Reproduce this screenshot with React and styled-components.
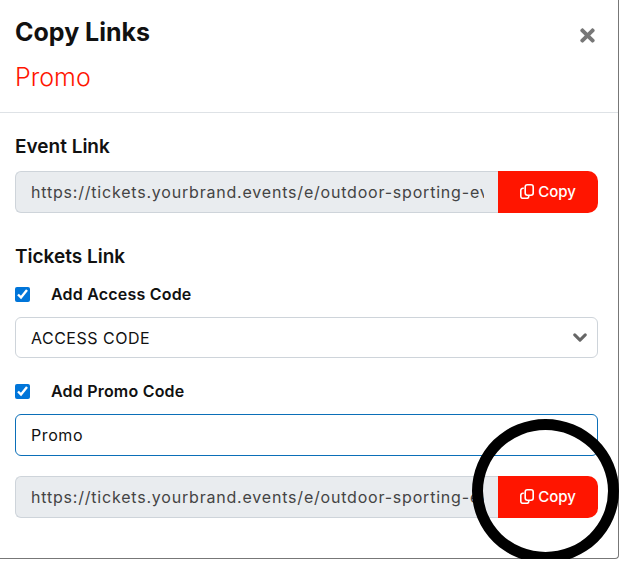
import React from 'react';
import styled, { createGlobalStyle } from 'styled-components';
import { FaTimes } from 'react-icons/fa';

const GlobalStyle = createGlobalStyle`
  html, body {
    margin: 0;
    padding: 0;
    background: #fff;
  }
  body {
    font-family: Inter, "Liberation Sans", sans-serif;
    color: #111;
  }
`;

const Modal = styled.div`
  position: relative;
  box-sizing: border-box;
  width: 619px;
  height: 559px;
  border-right: 1px solid #777;
  border-bottom: 1px solid #777;
  border-bottom-right-radius: 4px;
  background: #fff;
`;

const Header = styled.header`
  box-sizing: border-box;
  height: 113px;
  padding: 18px 20px 0 15px;
  border-bottom: 1px solid #dee2e6;
  display: flex;
  justify-content: space-between;
  align-items: flex-start;
`;

const Title = styled.h2`
  margin: 0;
  font-size: 25px;
  line-height: 29px;
  font-weight: 700;
  color: #111;
`;

const Subtitle = styled.div`
  margin-top: 16px;
  font-size: 25px;
  line-height: 29px;
  font-weight: 300;
  color: #ff1500;
`;

const CloseButton = styled.button`
  display: flex;
  padding: 0;
  margin: 7px 0 0;
  border: 0;
  background: none;
  color: #777;
  font-size: 21px;
`;

const Body = styled.div`
  padding: 23px 20px 0 15px;
  display: flex;
  flex-direction: column;
`;

const SectionLabel = styled.div`
  font-size: 19px;
  line-height: 22px;
  font-weight: 600;
  color: #111;
  margin-top: ${(props) => props.$top || 0}px;
`;

const LinkGroup = styled.div`
  display: flex;
  height: 42px;
  margin-top: ${(props) => props.$top}px;
`;

const LinkInput = styled.input`
  flex: 1;
  min-width: 0;
  box-sizing: border-box;
  height: 42px;
  padding: 0 14px 0 15px;
  border: 1px solid #ced4da;
  border-right: 0;
  border-radius: 6px 0 0 6px;
  background: #e9ecef;
  color: #444;
  font-family: Inter, sans-serif;
  font-size: 16px;
  letter-spacing: 0.8px;
  outline: none;
`;

const CopyButton = styled.button`
  width: 100px;
  height: 42px;
  padding: 0 0 2px;
  border: 0;
  border-radius: 0 10px 10px 0;
  background: #ff1500;
  color: #fff;
  font-family: Inter, sans-serif;
  font-size: 15px;
  font-weight: 500;
  display: flex;
  align-items: center;
  justify-content: center;
  gap: 4px;
`;

const CopyGlyph = styled.svg`
  width: 14px;
  height: 15px;
  fill: none;
  stroke: currentColor;
  stroke-width: 1.6;
`;

const CheckRow = styled.label`
  display: flex;
  align-items: center;
  height: 20px;
  margin-top: ${(props) => props.$top}px;
  font-size: 16px;
  font-weight: 600;
  letter-spacing: 0.2px;
  color: #111;
`;

const Check = styled.input`
  width: 15px;
  height: 15px;
  margin: 0 21px 0 0;
  accent-color: #0075d9;
`;

const Select = styled.select`
  box-sizing: border-box;
  height: 41px;
  margin-top: 13px;
  padding: 0 15px;
  border: 1px solid #ced4da;
  border-radius: 6px;
  appearance: none;
  color: #111;
  font-family: Inter, sans-serif;
  font-size: 16px;
  letter-spacing: 0.5px;
  background-color: #fff;
  background-repeat: no-repeat;
  background-position: right 10px center;
  background-size: 14px 11px;
  background-image: url("data:image/svg+xml,%3csvg xmlns='http://www.w3.org/2000/svg' viewBox='0 0 16 12'%3e%3cpath fill='none' stroke='%23666' stroke-linecap='round' stroke-linejoin='round' stroke-width='3.4' d='M2 3l6 6 6-6'/%3e%3c/svg%3e");
`;

const PromoInput = styled.input`
  box-sizing: border-box;
  height: 42px;
  margin-top: 13px;
  padding: 0 15px;
  border: 1px solid #0b6fb8;
  border-radius: 6px;
  color: #111;
  font-family: Inter, sans-serif;
  font-size: 16px;
  letter-spacing: 0.6px;
  outline: none;
`;

const Annotation = styled.div`
  position: absolute;
  left: 472px;
  top: 419px;
  box-sizing: border-box;
  width: 147px;
  height: 144px;
  border: 11px solid #000;
  border-radius: 50%;
  pointer-events: none;
`;

const LINK = 'https://tickets.yourbrand.events/e/outdoor-sporting-event';

function CopyIcon() {
  return (
    <CopyGlyph viewBox="0 0 14 15">
      <rect x="5.2" y="0.8" width="8" height="10.4" rx="2.2" />
      <path d="M3.8 4.2H2.9a2.1 2.1 0 0 0-2.1 2.1v6a2 2 0 0 0 2 2h3.9a2.1 2.1 0 0 0 2.1-2.1v-.9" />
    </CopyGlyph>
  );
}

function CopyLink({ top }) {
  return (
    <LinkGroup $top={top}>
      <LinkInput readOnly value={LINK} />
      <CopyButton>
        <CopyIcon />
        Copy
      </CopyButton>
    </LinkGroup>
  );
}

export default function App() {
  return (
    <>
      <GlobalStyle />
      <Modal>
        <Header>
          <div>
            <Title>Copy Links</Title>
            <Subtitle>Promo</Subtitle>
          </div>
          <CloseButton aria-label="Close">
            <FaTimes />
          </CloseButton>
        </Header>
        <Body>
          <SectionLabel>Event Link</SectionLabel>
          <CopyLink top={13} />
          <SectionLabel $top={33}>Tickets Link</SectionLabel>
          <CheckRow $top={16}>
            <Check type="checkbox" defaultChecked />
            Add Access Code
          </CheckRow>
          <Select defaultValue="access">
            <option value="access">ACCESS CODE</option>
          </Select>
          <CheckRow $top={23}>
            <Check type="checkbox" defaultChecked />
            Add Promo Code
          </CheckRow>
          <PromoInput defaultValue="Promo" />
          <CopyLink top={20} />
        </Body>
        <Annotation />
      </Modal>
    </>
  );
}
